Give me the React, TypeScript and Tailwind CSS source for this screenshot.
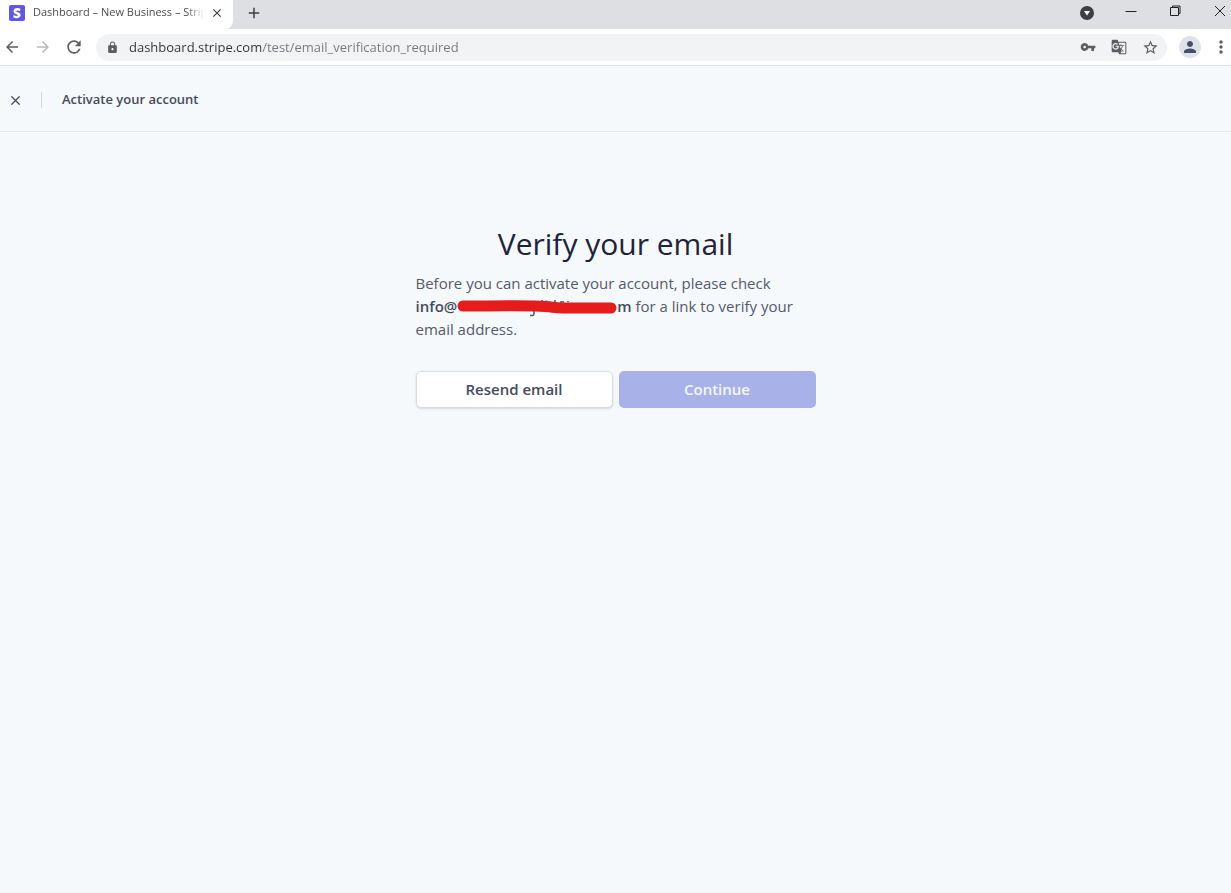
import { useState } from 'react';
import type { ReactNode } from 'react';
import { X } from 'lucide-react';
import { MdArrowBack, MdArrowForward, MdRefresh, MdLock, MdVpnKey, MdGTranslate, MdStarBorder, MdPerson, MdMoreVert, MdAdd, MdClose } from 'react-icons/md';

function IconButton({ label, children, className = '' }: { label: string; children: ReactNode; className?: string }) {
  return (
    <button type="button" aria-label={label} className={`flex shrink-0 items-center justify-center ${className}`}>
      {children}
    </button>
  );
}

function TabStrip() {
  return (
    <div className="flex h-[29px] justify-between bg-[#dedfe3]">
      <div className="flex">
        <div className="flex w-[233px] items-center rounded-br-lg bg-white pr-[9px] pb-1 pl-[9px]">
          <svg viewBox="0 0 16 16" className="size-4 shrink-0" aria-hidden="true">
            <rect width="16" height="16" rx="2" fill="#6058e0" />
            <path
              d="M7.3 6.2c0-.5.4-.7 1-.7.9 0 2 .3 2.9.8V3.600C10.200 3.200 9.300 3 8.300 3 6 3 4.500 4.200 4.500 6.300c0 3.100 4.200 2.600 4.200 4 0 .5-.5.7-1.100.7-1 0-2.200-.4-3.200-1v2.600c1.100.5 2.200.7 3.200.7 2.400 0 4-1.200 4-3.200C11.600 6.800 7.300 7.400 7.300 6.200z"
              fill="#fff"
            />
          </svg>
          <span className="ml-2 min-w-0 flex-1 overflow-hidden mask-r-from-90% text-[11px] whitespace-nowrap text-[#4a4d51]">
            Dashboard – New Business – Stripe
          </span>
          <IconButton label="Close tab" className="ml-1.5 text-[#3c4043]">
            <MdClose className="size-3.5" />
          </IconButton>
        </div>
        <IconButton label="New tab" className="ml-3 pb-1 text-[#3c4043]">
          <MdAdd className="size-[18px]" />
        </IconButton>
      </div>

      <div className="flex pb-1 text-[#202124]">
        <IconButton label="Search tabs" className="w-11">
          <svg viewBox="0 0 14 14" className="size-3.5">
            <circle cx="7" cy="7" r="7" fill="#3c4043" />
            <path d="M4 5h6L7 9.500z" fill="#fff" />
          </svg>
        </IconButton>
        <IconButton label="Minimize" className="w-11 pb-1">
          <svg viewBox="0 0 12 12" className="size-3" stroke="currentColor">
            <path d="M.5 6.500h11" />
          </svg>
        </IconButton>
        <IconButton label="Restore" className="w-11 pb-1">
          <svg viewBox="0 0 12 12" className="size-3" fill="none" stroke="currentColor">
            <path d="M1.500 2.500h8v8h-8zM3.500 2.500v-1.500h7.500v7.500h-1.500" />
          </svg>
        </IconButton>
        <IconButton label="Close" className="ml-3 w-[22px] pb-1">
          <svg viewBox="0 0 12 12" className="size-3" stroke="currentColor">
            <path d="M1 1l10 10M11 1L1 11" />
          </svg>
        </IconButton>
      </div>
    </div>
  );
}

function Toolbar() {
  const [url, setUrl] = useState('dashboard.stripe.com/test/email_verification_required');

  return (
    <div className="flex h-[37px] items-center border-b border-[#dcdfe3] bg-white pl-[3px] text-[#5a5d62]">
      <IconButton label="Back">
        <MdArrowBack className="size-[18px]" />
      </IconButton>
      <IconButton label="Forward" className="ml-[13px] text-[#b7babe]">
        <MdArrowForward className="size-[18px]" />
      </IconButton>
      <IconButton label="Reload" className="ml-3">
        <MdRefresh className="size-5" />
      </IconButton>
      <div className="ml-3 flex h-[27px] flex-1 items-center rounded-full bg-[#f1f3f4] pr-2 pl-2.5">
        <MdLock className="size-[13px] shrink-0" />
        <input
          type="text"
          aria-label="Address"
          value={url}
          onChange={(e) => setUrl(e.target.value)}
          className="ml-2.5 h-full min-w-0 flex-1 bg-[linear-gradient(to_right,#303236_132px,#74787d_132px)] bg-clip-text text-[13px] text-transparent outline-none"
        />
        <div className="flex gap-[15px]">
          <IconButton label="Passwords">
            <MdVpnKey className="size-4" />
          </IconButton>
          <IconButton label="Translate">
            <MdGTranslate className="size-4" />
          </IconButton>
          <IconButton label="Bookmark">
            <MdStarBorder className="size-[17px]" />
          </IconButton>
        </div>
      </div>
      <IconButton label="Profile" className="ml-3 size-[22px] rounded-full bg-[#dfe2e8] text-[#46506a]">
        <MdPerson className="size-[18px]" />
      </IconButton>
      <IconButton label="Menu" className="ml-2.5">
        <MdMoreVert className="size-5" />
      </IconButton>
    </div>
  );
}

// marker stroke over the hidden part of the address
function Redaction() {
  return (
    <svg viewBox="0 0 160 20" className="h-5 w-40 shrink-0" aria-hidden="true">
      <path d="M77 13v4q0 2-4 1.500M85 3v4M89.500 3.500v1M98 3v4M103 5h4M111 4v1" stroke="#4f566b" strokeWidth="1.500" fill="none" />
      <path
        d="M6 9C30 9 58 8.500 78 9S94 11 106 11L154 11"
        stroke="#e61c1c"
        strokeWidth="11"
        strokeLinecap="round"
        fill="none"
      />
    </svg>
  );
}

export default function App() {
  return (
    <div className="flex min-h-screen flex-col bg-[#f5f9fc] font-['Open_Sans','Noto_Sans',sans-serif]">
      <TabStrip />
      <Toolbar />

      <header className="flex h-[66px] items-center border-b border-[#e6ebf0] px-2 pt-[3px] text-[#454a5a]">
        <IconButton label="Close" className="size-[15px]">
          <X className="size-[15px]" strokeWidth={2} />
        </IconButton>
        <div className="ml-[18px] h-4 w-px bg-[#d3d8df]" />
        <p className="ml-5 text-[13px] font-semibold">Activate your account</p>
      </header>

      <main className="mx-auto w-full max-w-[400px] pt-[92px]">
        <h1 className="text-center text-[30px] leading-10 text-[#1f2238]">Verify your email</h1>
        <p className="mt-2 text-[15px] leading-[23px] text-[#555a68]">
          Before you can activate your account, please check{' '}
          <strong className="inline-flex items-center align-top font-semibold text-[#454a5c]">
            <span>info@</span>
            <Redaction />
            <span>m</span>
          </strong>{' '}
          for a link to verify your email address.
        </p>
        <div className="mt-[30px] grid grid-cols-2 gap-1.5 text-[15px] font-semibold">
          <button type="button" className="h-[37px] rounded-[5px] border border-[#d8dce3] bg-white text-[#454a5c] shadow-sm">
            Resend email
          </button>
          <button type="button" className="h-[37px] rounded-[5px] bg-[#a8b1e8] text-[#f5f7fe]">
            Continue
          </button>
        </div>
      </main>
    </div>
  );
}
